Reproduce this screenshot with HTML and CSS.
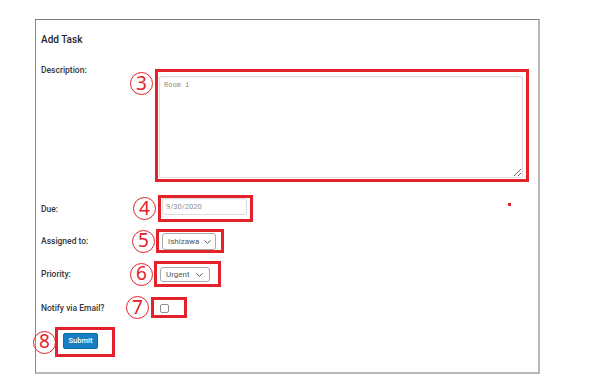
FILE: index.html
```html
<!DOCTYPE html>
<html lang="en">
<head>
<meta charset="utf-8">
<title>Add Task</title>
<link rel="stylesheet" href="styles.css">
</head>
<body>
<div class="panel">
  <h2 class="title">Add Task</h2>
  <form class="form">
    <div class="row row-desc">
      <label class="label">Description:</label>
      <div class="anno anno-desc">
        <span class="num">3</span>
        <div class="box box-desc"><textarea class="ta">Room 1</textarea></div>
      </div>
    </div>
    <div class="row row-due">
      <label class="label">Due:</label>
      <div class="anno anno-due">
        <span class="num">4</span>
        <div class="box box-due"><input class="inp" type="text" value="9/30/2020"></div>
      </div>
    </div>
    <div class="row row-assign">
      <label class="label">Assigned to:</label>
      <div class="anno anno-assign">
        <span class="num">5</span>
        <div class="box box-assign">
          <div class="select sel-assign"><span>Ishizawa</span><svg class="chev" width="7" height="4" viewBox="0 0 7 4"><path d="M0.5 0.5 L3.5 3.3 L6.5 0.5" fill="none" stroke="#50575e" stroke-width="1"/></svg></div>
        </div>
      </div>
    </div>
    <div class="row row-prio">
      <label class="label">Priority:</label>
      <div class="anno anno-prio">
        <span class="num">6</span>
        <div class="box box-prio">
          <div class="select sel-prio"><span>Urgent</span><svg class="chev" width="7" height="4" viewBox="0 0 7 4"><path d="M0.5 0.5 L3.5 3.3 L6.5 0.5" fill="none" stroke="#50575e" stroke-width="1"/></svg></div>
        </div>
      </div>
    </div>
    <div class="row row-notify">
      <label class="label">Notify via Email?</label>
      <div class="anno anno-notify">
        <span class="num">7</span>
        <div class="box box-notify"><input class="chk" type="checkbox"></div>
      </div>
    </div>
    <div class="row row-submit">
      <div class="anno anno-submit">
        <span class="num">8</span>
        <div class="box box-submit"><button class="btn" type="button">Submit</button></div>
      </div>
    </div>
  </form>
  <span class="dot"></span>
</div>
</body>
</html>
```

FILE: styles.css
```css
* { box-sizing: border-box; }
html, body { margin: 0; padding: 0; background: #fff; }
body { font-family: Roboto, "Liberation Sans", sans-serif; color: #2c3338; }

.panel {
  position: relative;
  margin: 19px 0 0 35px;
  width: 505px;
  height: 355px;
  border-top: 1px solid #7d7d7d;
  border-left: 1px solid #8a8a8a;
  border-right: 2px solid #b9b9b9;
  border-bottom: 2px solid #b9b9b9;
  padding: 12px 0 0 5px;
}

.title {
  margin: 0 0 17px;
  font-size: 10px;
  line-height: 15px;
  font-weight: 500;
  color: #23282d;
}

.form { display: flex; flex-direction: column; }

.row {
  display: grid;
  grid-template-columns: 85px auto;
  align-items: center;
  justify-content: start;
}
.row-desc { align-items: start; }
.row-due { margin-top: 13px; }
.row-assign { margin-top: 7px; }
.row-prio { margin-top: 8px; }
.row-notify { margin-top: 9px; }
.row-submit { margin-top: 8px; grid-template-columns: auto; }

.label {
  font-size: 8.5px;
  line-height: 12px;
  font-weight: 500;
  color: #32373c;
}

.anno { display: flex; align-items: center; gap: 1px; }
.anno-desc { margin-left: 4px; margin-top: 5px; align-items: flex-start; gap: 2px; }
.anno-desc .num { margin-top: 3px; }
.anno-due { margin-left: 7px; gap: 2px; }
.anno-assign { margin-left: 6px; }
.anno-prio { margin-left: 4px; }
.anno-notify { margin-left: 0; gap: 2px; }
.anno-submit { margin-left: -8px; gap: 0; }
.anno-submit .box { margin-left: -1px; }

.num {
  width: 23px;
  height: 23px;
  flex: none;
  border: 1.3px solid #e3222b;
  border-radius: 50%;
  color: #e3222b;
  font-family: "Noto Sans", "Open Sans", sans-serif;
  font-size: 19px;
  line-height: 1;
  display: flex;
  align-items: center;
  justify-content: center;
  padding-bottom: 1px;
}

.box { border: 3px solid #e3222b; display: flex; }
.box-desc { padding: 4px 3px 1px 1px; }
.box-due { padding: 0 3px 4px 1px; }
.box-assign { padding: 1px 5px 0 3px; }
.box-prio { padding: 3px 8px 2px 3px; }
.box-notify { padding: 4px 15px 2px 6px; }
.box-submit { padding: 3px 14px 5px 5px; }

.ta {
  display: block;
  width: 364px;
  height: 102px;
  margin: 0;
  border: 1px solid #dcdcde;
  border-radius: 2px;
  box-shadow: inset 0 1px 2px rgba(0,0,0,0.05);
  padding: 3px 4px;
  font-family: "Liberation Mono", monospace;
  font-size: 7px;
  line-height: 10px;
  color: #8a8a8a;
  resize: both;
}

.inp {
  display: block;
  width: 85px;
  height: 17px;
  margin: 0;
  border: 1px solid #dcdcde;
  border-radius: 2px;
  box-shadow: inset 0 1px 2px rgba(0,0,0,0.06);
  padding: 0 3px;
  font-family: Roboto, sans-serif;
  font-size: 7.5px;
  color: #8c8f94;
}

.select {
  display: flex;
  align-items: center;
  justify-content: space-between;
  border: 1px solid #a7aaad;
  border-radius: 3px;
  padding: 0 4px 0 5px;
  font-size: 8px;
  color: #50575e;
  background: #fff;
}
.sel-assign { width: 54px; height: 17px; }
.sel-prio { width: 50px; height: 15px; padding-right: 6px; }
.chev { display: block; flex: none; }

.chk {
  appearance: none;
  -webkit-appearance: none;
  display: block;
  width: 9px;
  height: 9px;
  margin: 0;
  border: 1px solid #8c8f94;
  border-radius: 2px;
  background: #fff;
}

.btn {
  display: block;
  width: 35px;
  height: 16px;
  margin: 0;
  padding: 0;
  border: 1px solid #0b6ea8;
  border-radius: 2px;
  background: #177fc1;
  color: #fff;
  font-family: Roboto, sans-serif;
  font-size: 7.5px;
  font-weight: 500;
  line-height: 14px;
  text-align: center;
}

.dot {
  position: absolute;
  left: 472px;
  top: 183px;
  width: 3px;
  height: 3px;
  background: #e3222b;
}
```
